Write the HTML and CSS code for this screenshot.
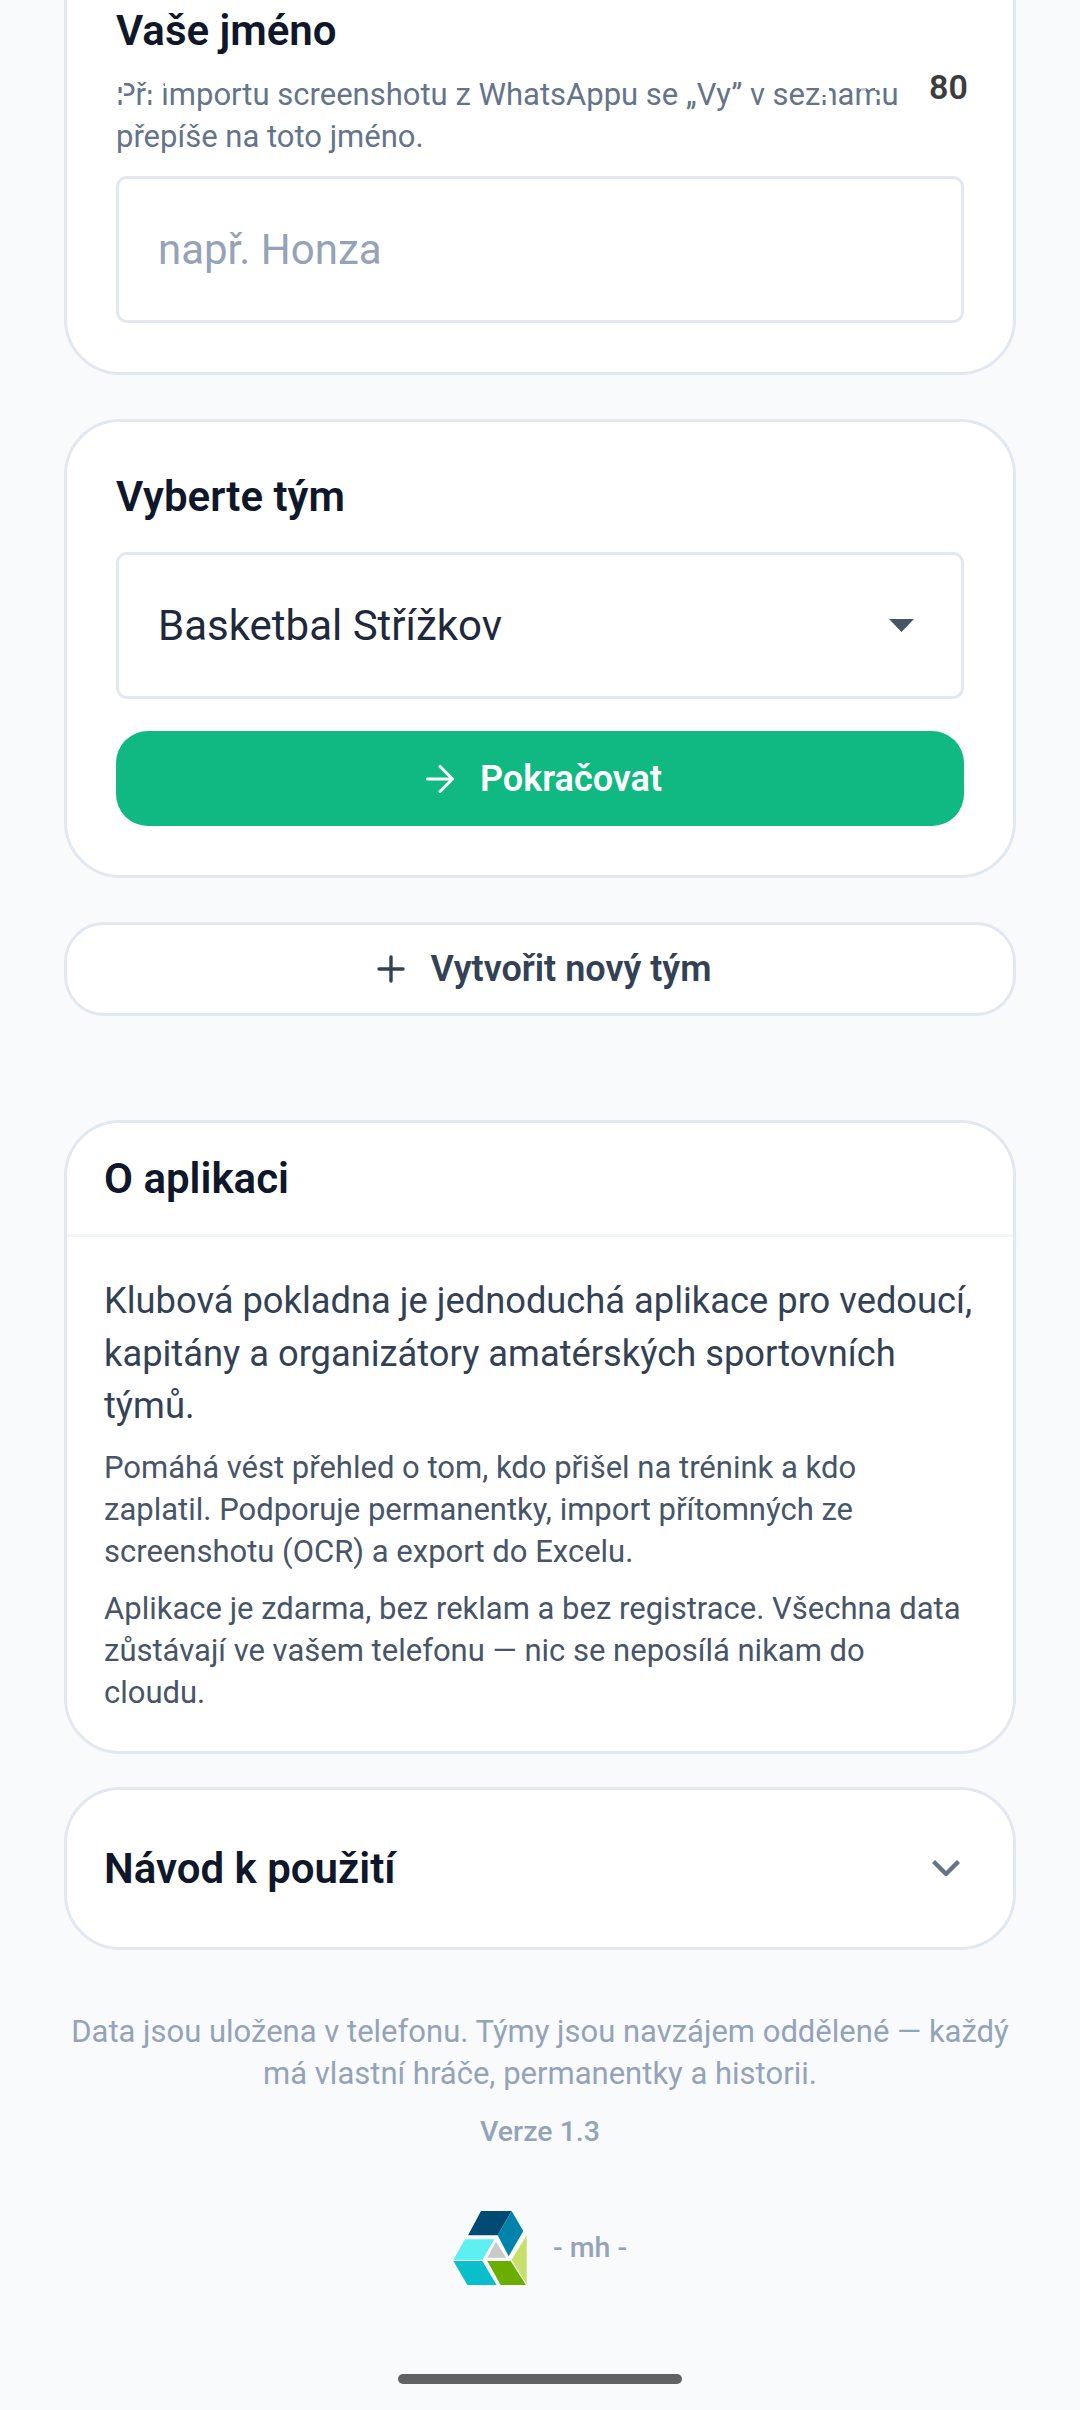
FILE: index.html
```html
<!doctype html>
<html>
    <head>
        <meta charset="utf-8" />
        <meta name="viewport" content="width=device-width, initial-scale=1" />
        <title>Klubová pokladna</title>
        <link rel="stylesheet" href="styles.css">
    </head>
    <body>
        <main class="page">
            <section class="card card-name">
                <label class="field-title" for="player_name">Vaše jméno</label>
                <p class="hint">Při importu screenshotu z WhatsAppu se „Vy” v seznamu přepíše na toto jméno.</p>
                <div class="input" id="player_name">např. Honza</div>
            </section>

            <section class="card card-team">
                <h2 class="field-title team-title">Vyberte tým</h2>
                <div class="select">
                    <span>Basketbal Střížkov</span>
                    <svg class="select-arrow" width="25" height="13" viewBox="0 0 25 13"><path d="M0 0H25L12.5 13Z" fill="#475569"/></svg>
                </div>
                <button class="btn btn-primary">
                    <svg width="28" height="28" viewBox="0 0 28 28" fill="none" stroke="#fff" stroke-width="3" stroke-linecap="round" stroke-linejoin="round"><path d="M1.5 14H26.5M14 1.5L26.5 14L14 26.5"/></svg>
                    Pokračovat
                </button>
            </section>

            <button class="btn btn-new">
                <svg width="28" height="28" viewBox="0 0 28 28" fill="none" stroke="#334155" stroke-width="3.4" stroke-linecap="round"><path d="M14 2V26M2 14H26"/></svg>
                Vytvořit nový tým
            </button>

            <section class="card about">
                <h2 class="about-title">O aplikaci</h2>
                <div class="about-body">
                    <p class="lead">Klubová pokladna je jednoduchá aplikace pro vedoucí, kapitány a organizátory amatérských sportovních týmů.</p>
                    <p>Pomáhá vést přehled o tom, kdo přišel na trénink a kdo zaplatil. Podporuje permanentky, import přítomných ze screenshotu (OCR) a export do Excelu.</p>
                    <p>Aplikace je zdarma, bez reklam a bez registrace. Všechna data zůstávají ve vašem telefonu — nic se neposílá nikam do cloudu.</p>
                </div>
            </section>

            <section class="card guide">
                <h2>Návod k použití</h2>
                <svg width="28" height="17" viewBox="0 0 28 17" fill="none" stroke="#64748b" stroke-width="4.4" stroke-linejoin="round"><path d="M1.5 1.5L14 14L26.5 1.5"/></svg>
            </section>

            <footer class="footer">
                <p>Data jsou uložena v telefonu. Týmy jsou navzájem oddělené — každý má vlastní hráče, permanentky a historii.</p>
                <p class="version">Verze 1.3</p>
                <div class="brand">
                    <svg width="74" height="74" viewBox="160 90 220 222">
                        <path d="M243 90H335L293 163H204Z" fill="#004a73"/>
                        <path d="M335 90L370 150L326 226L293 163Z" fill="#0083ab"/>
                        <path d="M195 175H283L247 237H160Z" fill="#5ef0f0"/>
                        <path d="M160 240H247L290 312H202Z" fill="#0abfcb"/>
                        <path d="M288 182L318 230H262Z" fill="#c9c9c9"/>
                        <path d="M262 240H332L378 312H302Z" fill="#6aae00"/>
                        <path d="M380 163V310L335 236Z" fill="#c6e06a"/>
                    </svg>
                    <span>- mh -</span>
                </div>
            </footer>
        </main>

        <!-- white status bar icons lie over the hint text -->
        <svg class="status-icons" width="800" height="40" viewBox="110 70 800 40" fill="#fff">
            <path d="M116 72h8v15h-8zM116 93h8v7h-8zM148 74h7v16h-7zM148 94h7v6h-7zM165 74h8v14h-8zM172 80h6v8h-6z"/>
            <path d="M810 78h11v9h-11zM822 82h7v13h-7zM822 97h7v3h-7zM875 84h5v6h-5zM875 95h5v4h-5z"/>
            <path d="M861 84h5v20h-5z" opacity=".55"/>
        </svg>
        <span class="status-level">80</span>
        <div class="home-bar"></div>
    </body>
</html>
```

FILE: styles.css
```css
* {
    box-sizing: border-box;
}

html,
body {
    margin: 0;
    height: 2410px;
    overflow: hidden;
}

body {
    position: relative;
    background: #f8fafc;
    font-family: Roboto, "Noto Sans", sans-serif;
    color: #0f172a;
}

p,
h2 {
    margin: 0;
}

.page {
    display: flex;
    flex-direction: column;
    padding: 0 64px;
}

.card {
    background: #fff;
    border: 3px solid #e2e8f0;
    border-radius: 56px;
}

.card-name {
    margin-top: -61px;
    padding: 60px 49px 49px;
}

.field-title {
    display: block;
    font-size: 42px;
    line-height: 58px;
    font-weight: 600;
    color: #0f172a;
}

.hint {
    margin-top: 14px;
    font-size: 31px;
    line-height: 42px;
    color: #64748b;
}

.input,
.select {
    display: flex;
    align-items: center;
    height: 147px;
    padding: 0 39px;
    background: #fff;
    border: 3px solid #e2e8f0;
    border-radius: 11px;
    font-size: 42px;
}

.input {
    margin-top: 18px;
    color: #94a3b8;
}

.card-team {
    margin-top: 44px;
    padding: 46px 49px 49px;
}

.select {
    justify-content: space-between;
    margin-top: 26px;
    padding-right: 47px;
    color: #1e293b;
}

.btn {
    display: flex;
    align-items: center;
    justify-content: center;
    gap: 26px;
    width: 100%;
    padding: 0 0 0 8px;
    border: 0;
    font-family: inherit;
    font-size: 36px;
    font-weight: 600;
}

.btn-primary {
    height: 95px;
    margin-top: 32px;
    background: #10b981;
    border-radius: 32px;
    color: #fff;
}

.btn-new {
    height: 94px;
    margin-top: 44px;
    background: #fff;
    border: 3px solid #e2e8f0;
    border-radius: 40px;
    color: #334155;
}

.about {
    margin-top: 104px;
}

.about-title {
    padding: 27px 37px 26px;
    font-size: 42px;
    line-height: 58px;
    font-weight: 600;
    border-bottom: 3px solid #f1f5f9;
}

.about-body {
    padding: 38px 45px 37px 37px;
    font-size: 31px;
    line-height: 42px;
    color: #475569;
}

.about-body p + p {
    margin-top: 15px;
}

.about-body .lead {
    margin-right: -8px;
    margin-bottom: -1px;
    font-size: 36.3px;
    line-height: 52.5px;
    color: #334155;
}

.guide {
    display: flex;
    align-items: center;
    justify-content: space-between;
    height: 163px;
    margin-top: 33px;
    padding: 0 53px 0 37px;
}

.guide h2 {
    font-size: 42px;
    font-weight: 600;
}

.footer {
    margin-top: 61px;
    text-align: center;
    font-size: 31px;
    line-height: 42px;
    color: #94a3b8;
}

.footer .version {
    margin-top: 16px;
    font-size: 28.5px;
    font-weight: 500;
}

.brand {
    display: flex;
    align-items: center;
    justify-content: center;
    gap: 26px;
    margin-top: 58px;
    font-size: 28.5px;
    font-weight: 500;
}

.status-icons {
    position: absolute;
    left: 110px;
    top: 70px;
}

.status-level {
    position: absolute;
    left: 929px;
    top: 68px;
    font-size: 34px;
    line-height: 38px;
    font-weight: 600;
    color: #3c3c3c;
}

.home-bar {
    position: absolute;
    left: 398px;
    top: 2374px;
    width: 284px;
    height: 10px;
    border-radius: 5px;
    background: #606264;
}
```
